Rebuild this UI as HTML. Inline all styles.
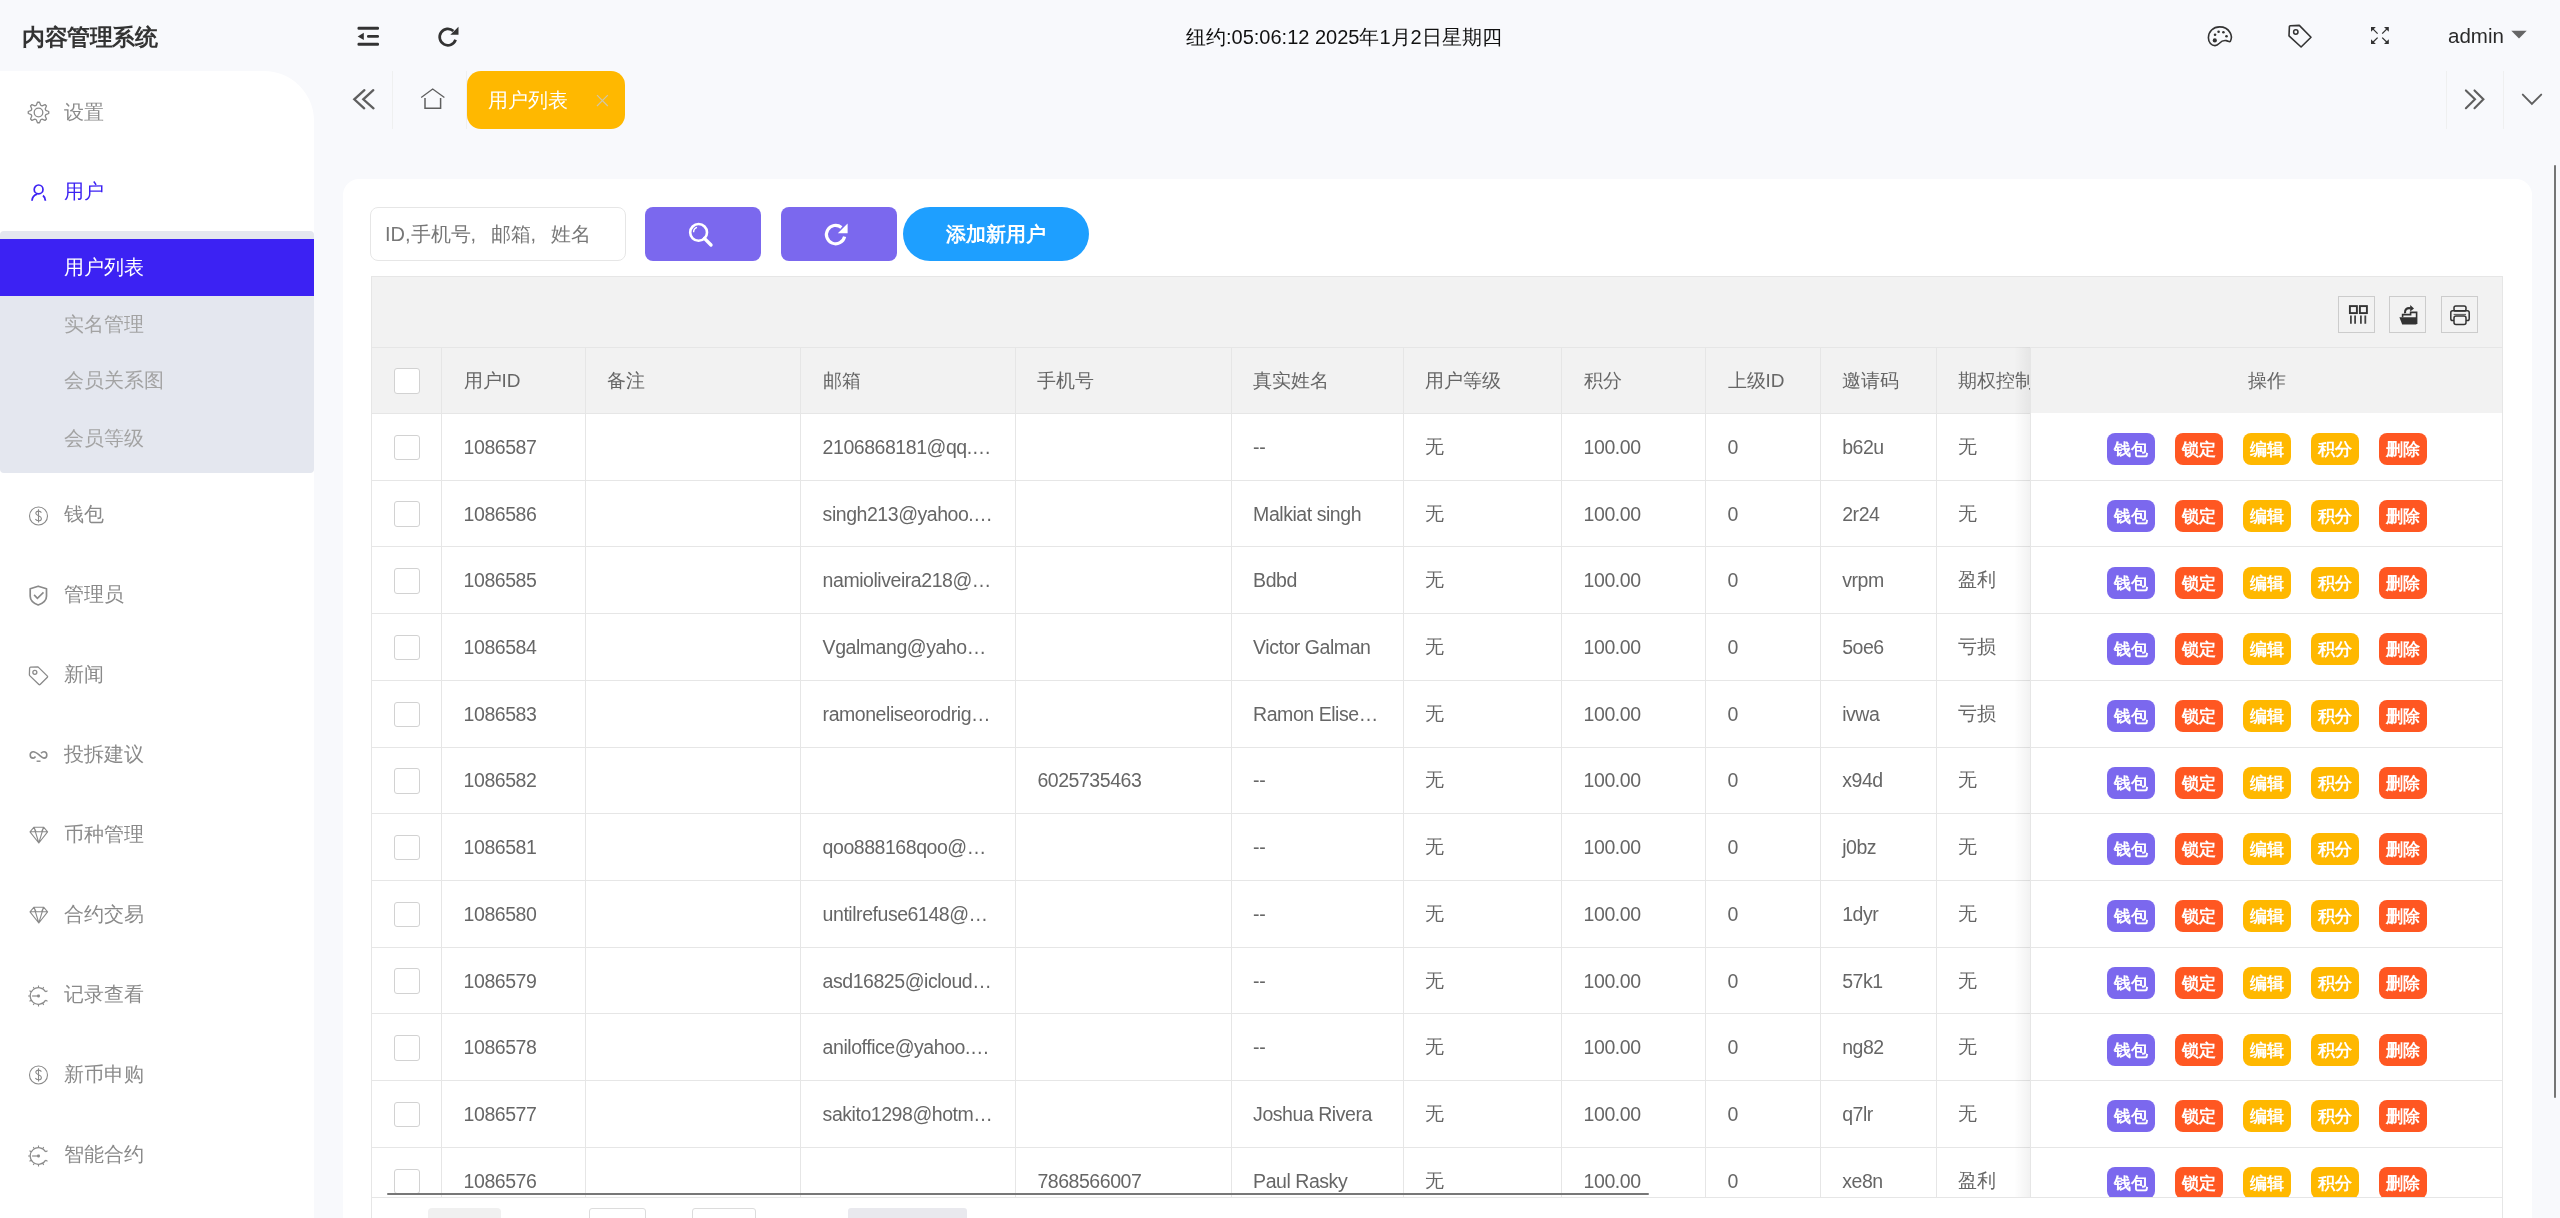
<!DOCTYPE html><html><head><meta charset="utf-8"><style>
*{box-sizing:border-box;margin:0;padding:0}
html,body{width:2560px;height:1218px;overflow:hidden}
body{background:#f8f9fc;font-family:"Liberation Sans",sans-serif;position:relative;color:#333}
.a{position:absolute}
svg{display:block;position:absolute;overflow:visible}
.logo{left:22px;top:21px;font-size:23px;letter-spacing:-0.5px;font-weight:bold;color:#333;white-space:nowrap;line-height:32px}
.side{left:0;top:71px;width:314px;height:1200px;background:#fff;border-top-right-radius:50px}
.mi{position:absolute;left:64px;font-size:20px;color:#8a8a8a;line-height:28px;white-space:nowrap}
.sub{left:0;top:231px;width:314px;height:242px;background:#e4e7ef;border-radius:4px}
.act{left:0;top:239px;width:314px;height:57px;background:#3c22f3}
.card{left:343px;top:179px;width:2189px;height:1100px;background:#fff;border-radius:16px}
.t{position:absolute;font-size:19.5px;letter-spacing:-0.45px;color:#666;white-space:nowrap;line-height:24px}
.th{position:absolute;font-size:19px;color:#666;white-space:nowrap;line-height:24px}
.hl{position:absolute;height:1px;background:#e6e6e6}
.vl{position:absolute;width:1px;background:#e6e6e6}
.cb{position:absolute;width:25.5px;height:25.5px;border:1px solid #d2d2d2;border-radius:3px;background:#fff}
.btn{position:absolute;width:48px;height:32px;border-radius:8px;color:#fff;font-size:17px;font-weight:bold;text-align:center;line-height:33px;letter-spacing:0}
.tb{position:absolute;width:37px;height:37px;border:1px solid #ccc}
</style></head><body><div id="w" style="position:absolute;left:0;top:0;width:2560px;height:1218px;overflow:hidden;will-change:transform">
<div class="a logo">内容管理系统</div>
<svg style="left:357px;top:26px" width="23" height="20" viewBox="0 0 23 20"><rect x="0.5" y="0.7" width="21.5" height="3" rx="1.2" fill="#333"/><rect x="10" y="9" width="12" height="2.8" rx="1.2" fill="#333"/><rect x="0.5" y="16.8" width="21.5" height="3" rx="1.2" fill="#333"/><path d="M0.7 10.4 L6.8 6.8 L6.8 14 Z" fill="#333"/></svg>
<svg style="left:438px;top:26px" width="22" height="21" viewBox="0 0 22 21"><path d="M17.6 13.8 A8.2 8.2 0 1 1 15.4 5" fill="none" stroke="#333" stroke-width="2.7"/><path d="M20.5 0.8 L20.5 8.8 L12.3 8.8 Z" fill="#333"/></svg>
<div class="a" style="left:1186px;top:23px;font-size:20px;color:#111;line-height:28px;white-space:nowrap">纽约:05:06:12 2025年1月2日星期四</div>
<svg style="left:2207px;top:26px" width="26" height="21" viewBox="0 0 26 21"><path d="M23.3 15.4 C24.6 13 24.8 9.5 23 6.5 C20.8 2.8 16.8 0.9 12.6 0.9 C6.2 0.9 1.4 5.6 1.4 11.8 C1.4 16.4 4.6 19.6 8 19.6 C10 19.6 11 18.6 12.4 17.2 C14.4 15.1 16.6 14.2 19.2 14.6 C21 14.9 22.6 16.4 23.3 15.4 Z" fill="none" stroke="#333" stroke-width="1.6"/><circle cx="7.8" cy="14.4" r="2.1" fill="#333"/><circle cx="8.05" cy="8.8" r="1.3" fill="#333"/><circle cx="11.6" cy="5.75" r="1.3" fill="#333"/><circle cx="16.4" cy="6.3" r="1.3" fill="#333"/><circle cx="19.5" cy="10.3" r="1.3" fill="#333"/></svg>
<svg style="left:2288px;top:24px" width="24" height="24" viewBox="0 0 24 24"><path d="M1.4 2.6 Q1.4 2 2.4 1.8 L11.3 1.4 L23 13.3 L13.1 23 L1 11.8 Z" fill="none" stroke="#333" stroke-width="1.6" stroke-linejoin="round"/><circle cx="7.8" cy="8" r="2.2" fill="none" stroke="#333" stroke-width="1.5"/></svg>
<svg style="left:2370px;top:26px" width="20" height="19" viewBox="0 0 20 19"><g fill="#333"><path d="M1 1 H5.8 L1 5.8 Z"/><path d="M18.8 1 H14 L18.8 5.8 Z"/><path d="M1 18.1 H5.8 L1 13.3 Z"/><path d="M18.8 18.1 H14 L18.8 13.3 Z"/></g><g stroke="#333" stroke-width="1.3"><path d="M2.6 2.6 L7.6 7.6 M17.2 2.6 L12.2 7.6 M2.6 16.5 L7.6 11.6 M17.2 16.5 L12.2 11.6"/></g></svg>
<div class="a" style="left:2448px;top:22px;font-size:20.5px;color:#2a2a2a;line-height:28px">admin</div>
<svg style="left:2511px;top:30px" width="16" height="9" viewBox="0 0 16 9"><path d="M0.3 0.8 H15.7 L8 8.6 Z" fill="#666"/></svg>
<div class="a side"></div><div class="a sub"></div><div class="a act"></div>
<div class="mi" style="top:98px;color:#8a8a8a">设置</div>
<div class="mi" style="top:177px;color:#3c22f3">用户</div>
<div class="mi" style="top:499.5px;color:#8a8a8a">钱包</div>
<div class="mi" style="top:579.56px;color:#8a8a8a">管理员</div>
<div class="mi" style="top:659.62px;color:#8a8a8a">新闻</div>
<div class="mi" style="top:739.68px;color:#8a8a8a">投拆建议</div>
<div class="mi" style="top:819.74px;color:#8a8a8a">币种管理</div>
<div class="mi" style="top:899.8px;color:#8a8a8a">合约交易</div>
<div class="mi" style="top:979.86px;color:#8a8a8a">记录查看</div>
<div class="mi" style="top:1059.92px;color:#8a8a8a">新币申购</div>
<div class="mi" style="top:1139.98px;color:#8a8a8a">智能合约</div>
<div class="mi" style="top:253px;color:#fff">用户列表</div>
<div class="mi" style="top:310px;color:#a3a3a3">实名管理</div>
<div class="mi" style="top:366px;color:#a3a3a3">会员关系图</div>
<div class="mi" style="top:424px;color:#a3a3a3">会员等级</div>
<svg style="left:28px;top:101.5px" width="21" height="21" viewBox="0 0 21 21"><path d="M9.49 0.25 L11.51 0.25 L12.71 3.23 L14.08 3.80 L17.03 2.54 L18.46 3.97 L17.20 6.92 L17.77 8.29 L20.75 9.49 L20.75 11.51 L17.77 12.71 L17.20 14.08 L18.46 17.03 L17.03 18.46 L14.08 17.20 L12.71 17.77 L11.51 20.75 L9.49 20.75 L8.29 17.77 L6.92 17.20 L3.97 18.46 L2.54 17.03 L3.80 14.08 L3.23 12.71 L0.25 11.51 L0.25 9.49 L3.23 8.29 L3.80 6.92 L2.54 3.97 L3.97 2.54 L6.92 3.80 L8.29 3.23Z" fill="none" stroke="#8a8a8a" stroke-width="1.3" stroke-linejoin="round"/><circle cx="10.5" cy="10.5" r="4.3" fill="none" stroke="#8a8a8a" stroke-width="1.3"/></svg>
<svg style="left:31px;top:183.5px" width="16" height="17" viewBox="0 0 16 17"><circle cx="7.6" cy="5.4" r="4.4" fill="none" stroke="#3c22f3" stroke-width="1.7"/><path d="M1 16.7 C1.2 13.4 3 11 6.2 10.1" fill="none" stroke="#3c22f3" stroke-width="1.8"/><path d="M12 11.5 C13.4 12.6 14.3 14.4 14.4 16.7" fill="none" stroke="#3c22f3" stroke-width="1.8"/></svg>
<svg style="left:28.5px;top:505.5px" width="20" height="20" viewBox="0 0 20 20"><circle cx="9.5" cy="10" r="9" fill="none" stroke="#8a8a8a" stroke-width="1.1"/><path d="M12.4 6.6 C11.8 5.6 10.8 5.1 9.5 5.1 C7.9 5.1 6.8 6 6.8 7.3 C6.8 10.1 12.4 9.2 12.4 12.4 C12.4 13.8 11.2 14.8 9.5 14.8 C8 14.8 6.9 14.1 6.4 13 M9.5 3.3 V16.6" fill="none" stroke="#8a8a8a" stroke-width="1.1"/></svg>
<svg style="left:29px;top:584.8px" width="19" height="21" viewBox="0 0 19 21"><path d="M9.2 1.2 L17.5 3.8 V11.2 C17.5 15.2 13.6 18.3 9.2 20 C4.8 18.3 1.2 15.2 1.2 11.2 V3.8 Z" fill="none" stroke="#8a8a8a" stroke-width="1.7" stroke-linejoin="round"/><path d="M5.1 9.9 L8.4 13.3 L14.5 7.4" fill="none" stroke="#8a8a8a" stroke-width="1.6"/></svg>
<svg style="left:28px;top:665.5px" width="21" height="21" viewBox="0 0 21 21"><path d="M2.6 1.1 L10 0.9 L19.4 10.1 Q19.9 10.7 19.4 11.2 L12.1 18.5 Q11.5 19 10.9 18.5 L1.7 9.6 Q1.3 9.2 1.4 8.6 L1.6 2.2 Q1.7 1.2 2.6 1.1 Z" fill="none" stroke="#8a8a8a" stroke-width="1.3" stroke-linejoin="round"/><circle cx="6.85" cy="6.3" r="2" fill="none" stroke="#8a8a8a" stroke-width="1.3"/></svg>
<svg style="left:29px;top:750px" width="19" height="13" viewBox="0 0 19 13"><path d="M6.5 6.5 C5.8 7.6 5 8.1 4.2 8.1 C2.6 8.1 1.2 7 1.2 5 C1.2 3 2.6 1.8 4.2 1.8 C6.6 1.8 9 4 10.6 5.4 C12.2 6.8 13.4 8.1 15 8.1 C16.6 8.1 17.8 6.9 17.8 5 C17.8 3 16.6 1.8 15 1.8 C13.8 1.8 12.6 2.6 12 3.3" fill="none" stroke="#8a8a8a" stroke-width="1.6"/><path d="M7.6 11.2 H11.5" stroke="#8a8a8a" stroke-width="1.4"/></svg>
<svg style="left:29px;top:826px" width="20" height="18" viewBox="0 0 20 18"><path d="M1 5.8 L5 1.2 H14.6 L18.6 5.8 L9.8 17 Z M1 5.8 H18.6 M5 1.2 L9.8 17 L14.6 1.2 M5 1.2 L7 5.8 M14.6 1.2 L12.6 5.8" fill="none" stroke="#8a8a8a" stroke-width="1.1" stroke-linejoin="round"/></svg>
<svg style="left:29px;top:906px" width="20" height="18" viewBox="0 0 20 18"><path d="M1 5.8 L5 1.2 H14.6 L18.6 5.8 L9.8 17 Z M1 5.8 H18.6 M5 1.2 L9.8 17 L14.6 1.2 M5 1.2 L7 5.8 M14.6 1.2 L12.6 5.8" fill="none" stroke="#8a8a8a" stroke-width="1.1" stroke-linejoin="round"/></svg>
<svg style="left:28px;top:982.5px" width="22" height="26" viewBox="0 0 22 26"><path d="M17.69 8.85 A8.3 8.3 0 1 0 17.69 17.15" fill="none" stroke="#8a8a8a" stroke-width="1.2"/><path d="M17.69 8.85 L19.51 7.80 M14.65 5.81 L15.70 3.99 M10.50 4.70 L10.50 2.60 M6.35 5.81 L5.30 3.99 M3.31 8.85 L1.49 7.80 M2.20 13.00 L0.10 13.00 M3.31 17.15 L1.49 18.20 M6.35 20.19 L5.30 22.01 M10.50 21.30 L10.50 23.40 M14.65 20.19 L15.70 22.01 M17.69 17.15 L19.51 18.20" stroke="#8a8a8a" stroke-width="1.1"/><path d="M4.1 13 H10" stroke="#8a8a8a" stroke-width="1.2"/><rect x="9.1" y="11.6" width="2.8" height="2.8" rx="0.8" fill="#8a8a8a"/></svg>
<svg style="left:28.5px;top:1065px" width="20" height="20" viewBox="0 0 20 20"><circle cx="9.5" cy="10" r="9" fill="none" stroke="#8a8a8a" stroke-width="1.1"/><path d="M12.4 6.6 C11.8 5.6 10.8 5.1 9.5 5.1 C7.9 5.1 6.8 6 6.8 7.3 C6.8 10.1 12.4 9.2 12.4 12.4 C12.4 13.8 11.2 14.8 9.5 14.8 C8 14.8 6.9 14.1 6.4 13 M9.5 3.3 V16.6" fill="none" stroke="#8a8a8a" stroke-width="1.1"/></svg>
<svg style="left:28px;top:1142.5px" width="22" height="26" viewBox="0 0 22 26"><path d="M17.69 8.85 A8.3 8.3 0 1 0 17.69 17.15" fill="none" stroke="#8a8a8a" stroke-width="1.2"/><path d="M17.69 8.85 L19.51 7.80 M14.65 5.81 L15.70 3.99 M10.50 4.70 L10.50 2.60 M6.35 5.81 L5.30 3.99 M3.31 8.85 L1.49 7.80 M2.20 13.00 L0.10 13.00 M3.31 17.15 L1.49 18.20 M6.35 20.19 L5.30 22.01 M10.50 21.30 L10.50 23.40 M14.65 20.19 L15.70 22.01 M17.69 17.15 L19.51 18.20" stroke="#8a8a8a" stroke-width="1.1"/><path d="M4.1 13 H10" stroke="#8a8a8a" stroke-width="1.2"/><rect x="9.1" y="11.6" width="2.8" height="2.8" rx="0.8" fill="#8a8a8a"/></svg>
<svg style="left:353px;top:88px" width="22" height="22" viewBox="0 0 22 22"><path d="M11.4 2.2 L1.3 11.3 L11.2 20.3 M20.3 2.2 L10.3 11.3 L20.5 20.3" fill="none" stroke="#5f5f5f" stroke-width="2.3" stroke-linecap="round"/></svg>
<div class="a" style="left:392px;top:71px;width:1px;height:58px;background:#eff0f0"></div>
<svg style="left:420px;top:88px" width="26" height="22" viewBox="0 0 26 22"><path d="M1.2 9.6 L12.7 1 L24.4 9.6" fill="none" stroke="#5f5f5f" stroke-width="1.3"/><path d="M5 10 V20.2 H20.6 V10" fill="none" stroke="#5f5f5f" stroke-width="1.5"/></svg>
<div class="a" style="left:466px;top:71px;width:1px;height:58px;background:#eff0f0"></div>
<div class="a" style="left:467px;top:71px;width:158px;height:58px;background:#ffb800;border-radius:14px"></div>
<div class="a" style="left:488px;top:86px;font-size:20px;color:#fff;line-height:28px">用户列表</div>
<svg style="left:596px;top:94px" width="13" height="13" viewBox="0 0 13 13"><path d="M1 1.2 L11.8 12 M11.8 1.2 L1 12" stroke="#d0c6a8" stroke-width="1.2"/></svg>
<div class="a" style="left:2446px;top:71px;width:1px;height:58px;background:#eff0f0"></div>
<div class="a" style="left:2503px;top:71px;width:1px;height:58px;background:#eff0f0"></div>
<svg style="left:2464px;top:88px" width="22" height="22" viewBox="0 0 22 22"><path d="M1.9 2.4 L11 11.3 L1.9 20.2 M10.5 2.4 L19.4 11.3 L10.5 20.2" fill="none" stroke="#5f5f5f" stroke-width="2.1" stroke-linecap="round"/></svg>
<svg style="left:2521px;top:93px" width="22" height="13" viewBox="0 0 22 13"><path d="M1.8 1.6 L10.9 11 L20.2 1.6" fill="none" stroke="#5f5f5f" stroke-width="1.9" stroke-linecap="round"/></svg>
<div class="a card"></div>
<div class="a" style="left:370px;top:207px;width:256px;height:54px;border:1px solid #e6e6e6;border-radius:8px;background:#fff"></div>
<div class="a" style="left:385px;top:220px;font-size:20px;color:#777;line-height:28px;white-space:nowrap">ID,手机号<span style="display:inline-block;width:20px">,</span>邮箱<span style="display:inline-block;width:20px">,</span>姓名</div>
<div class="a" style="left:645px;top:207px;width:116px;height:54px;background:#7b68ee;border-radius:8px"></div>
<svg style="left:688px;top:222px" width="26" height="25" viewBox="0 0 26 25"><circle cx="10.6" cy="10.4" r="8.4" fill="none" stroke="#fff" stroke-width="2.6"/><path d="M16.4 16.4 L23 23" stroke="#fff" stroke-width="3.4" stroke-linecap="round"/><path d="M5.6 10.2 A5 5 0 0 1 9 5.4" fill="none" stroke="#fff" stroke-width="1.4"/></svg>
<div class="a" style="left:781px;top:207px;width:116px;height:54px;background:#7b68ee;border-radius:8px"></div>
<svg style="left:824px;top:222px" width="26" height="25" viewBox="0 0 26 25"><path d="M20.6 14.6 A9.2 9.2 0 1 1 17.4 5.4" fill="none" stroke="#fff" stroke-width="3.2"/><path d="M23.6 1.4 V11.2 H13.8 Z" fill="#fff"/></svg>
<div class="a" style="left:903px;top:207px;width:186px;height:54px;background:#1e9fff;border-radius:27px"></div>
<div class="a" style="left:946px;top:219px;font-size:19.5px;font-weight:bold;color:#fff;line-height:30px;white-space:nowrap">添加新用户</div>
<div class="a" style="left:371px;top:276px;width:2132px;height:137.5px;background:#f2f2f2"></div>
<div class="a" style="left:371px;top:276px;width:2132px;height:922.5px;border:1px solid #e6e6e6"></div>
<div class="hl" style="left:371px;top:347.2px;width:2132px"></div>
<div class="hl" style="left:371px;top:413.0px;width:2132px"></div>
<div class="tb" style="left:2338px;top:296px"></div>
<div class="tb" style="left:2389.3px;top:296px"></div>
<div class="tb" style="left:2441px;top:296px"></div>
<svg style="left:2348px;top:304px" width="21" height="21" viewBox="0 0 21 21"><rect x="1.9" y="2.1" width="7" height="7" fill="none" stroke="#333" stroke-width="1.9"/><rect x="11.9" y="2.1" width="7" height="7" fill="none" stroke="#333" stroke-width="1.9"/><path d="M2.9 11.6 V19.8 M7.1 11.6 V19.8 M12.9 11.6 V19.8 M17.3 11.6 V19.8" stroke="#444" stroke-width="1.8"/></svg>
<svg style="left:2399px;top:305px" width="20" height="21" viewBox="0 0 20 21"><path d="M0.4 12.3 H17.4 V19.6 H3.2 Z" fill="#333"/><path d="M3.6 12.3 V9.6 H11.6 V7.4 H17.6 V19" fill="none" stroke="#333" stroke-width="1.6"/><path d="M6 8.2 C5.4 4.6 8 2.6 11.6 3.4" fill="none" stroke="#333" stroke-width="2.2"/><path d="M11.2 0 L15 3.4 L11.2 6.4 Z" fill="#333"/></svg>
<svg style="left:2450px;top:305px" width="21" height="21" viewBox="0 0 21 21"><rect x="4" y="1" width="12" height="5" rx="1.8" fill="none" stroke="#333" stroke-width="1.5"/><path d="M4 15.6 H2.6 C1.6 15.6 0.8 14.8 0.8 13.8 V7.6 C0.8 6.6 1.6 5.8 2.6 5.8 H17.4 C18.4 5.8 19.2 6.6 19.2 7.6 V13.8 C19.2 14.8 18.4 15.6 17.4 15.6 H16" fill="none" stroke="#333" stroke-width="1.5"/><rect x="4" y="11" width="12" height="8.6" rx="2" fill="none" stroke="#333" stroke-width="1.5"/><path d="M3.6 9.4 H16" stroke="#555" stroke-width="1"/></svg>
<div class="vl" style="left:441.1px;top:347.2px;height:850.3px"></div>
<div class="vl" style="left:584.8px;top:347.2px;height:850.3px"></div>
<div class="vl" style="left:800.1px;top:347.2px;height:850.3px"></div>
<div class="vl" style="left:1014.9px;top:347.2px;height:850.3px"></div>
<div class="vl" style="left:1230.6px;top:347.2px;height:850.3px"></div>
<div class="vl" style="left:1402.7px;top:347.2px;height:850.3px"></div>
<div class="vl" style="left:1561.1px;top:347.2px;height:850.3px"></div>
<div class="vl" style="left:1705.0px;top:347.2px;height:850.3px"></div>
<div class="vl" style="left:1819.7px;top:347.2px;height:850.3px"></div>
<div class="vl" style="left:1935.7px;top:347.2px;height:850.3px"></div>
<div class="th" style="left:463.6px;top:369px">用户ID</div>
<div class="th" style="left:607.3px;top:369px">备注</div>
<div class="th" style="left:822.6px;top:369px">邮箱</div>
<div class="th" style="left:1037.4px;top:369px">手机号</div>
<div class="th" style="left:1253.1px;top:369px">真实姓名</div>
<div class="th" style="left:1425.2px;top:369px">用户等级</div>
<div class="th" style="left:1583.6px;top:369px">积分</div>
<div class="th" style="left:1727.5px;top:369px">上级ID</div>
<div class="th" style="left:1842.2px;top:369px">邀请码</div>
<div class="th" style="left:1958.2px;top:369px">期权控制</div>
<div class="cb" style="left:394px;top:368px"></div>
<div class="hl" style="left:371px;top:479.72px;width:2132px"></div>
<div class="cb" style="left:394.3px;top:434.66px"></div>
<div class="t" style="left:463.6px;top:434.86px">1086587</div>
<div class="t" style="left:822.6px;top:434.86px">2106868181@qq.…</div>
<div class="t" style="left:1253.1px;top:434.86px">--</div>
<div class="th" style="left:1425.2px;top:434.86px">无</div>
<div class="t" style="left:1583.6px;top:434.86px">100.00</div>
<div class="t" style="left:1727.5px;top:434.86px">0</div>
<div class="t" style="left:1842.2px;top:434.86px">b62u</div>
<div class="th" style="left:1958.2px;top:434.86px">无</div>
<div class="hl" style="left:371px;top:546.44px;width:2132px"></div>
<div class="cb" style="left:394.3px;top:501.38000000000005px"></div>
<div class="t" style="left:463.6px;top:501.58000000000004px">1086586</div>
<div class="t" style="left:822.6px;top:501.58000000000004px">singh213@yahoo.…</div>
<div class="t" style="left:1253.1px;top:501.58000000000004px">Malkiat singh</div>
<div class="th" style="left:1425.2px;top:501.58000000000004px">无</div>
<div class="t" style="left:1583.6px;top:501.58000000000004px">100.00</div>
<div class="t" style="left:1727.5px;top:501.58000000000004px">0</div>
<div class="t" style="left:1842.2px;top:501.58000000000004px">2r24</div>
<div class="th" style="left:1958.2px;top:501.58000000000004px">无</div>
<div class="hl" style="left:371px;top:613.1600000000001px;width:2132px"></div>
<div class="cb" style="left:394.3px;top:568.1px"></div>
<div class="t" style="left:463.6px;top:568.3000000000001px">1086585</div>
<div class="t" style="left:822.6px;top:568.3000000000001px">namioliveira218@…</div>
<div class="t" style="left:1253.1px;top:568.3000000000001px">Bdbd</div>
<div class="th" style="left:1425.2px;top:568.3000000000001px">无</div>
<div class="t" style="left:1583.6px;top:568.3000000000001px">100.00</div>
<div class="t" style="left:1727.5px;top:568.3000000000001px">0</div>
<div class="t" style="left:1842.2px;top:568.3000000000001px">vrpm</div>
<div class="th" style="left:1958.2px;top:568.3000000000001px">盈利</div>
<div class="hl" style="left:371px;top:679.88px;width:2132px"></div>
<div class="cb" style="left:394.3px;top:634.8199999999999px"></div>
<div class="t" style="left:463.6px;top:635.02px">1086584</div>
<div class="t" style="left:822.6px;top:635.02px">Vgalmang@yaho…</div>
<div class="t" style="left:1253.1px;top:635.02px">Victor Galman</div>
<div class="th" style="left:1425.2px;top:635.02px">无</div>
<div class="t" style="left:1583.6px;top:635.02px">100.00</div>
<div class="t" style="left:1727.5px;top:635.02px">0</div>
<div class="t" style="left:1842.2px;top:635.02px">5oe6</div>
<div class="th" style="left:1958.2px;top:635.02px">亏损</div>
<div class="hl" style="left:371px;top:746.6px;width:2132px"></div>
<div class="cb" style="left:394.3px;top:701.54px"></div>
<div class="t" style="left:463.6px;top:701.74px">1086583</div>
<div class="t" style="left:822.6px;top:701.74px">ramoneliseorodrig…</div>
<div class="t" style="left:1253.1px;top:701.74px">Ramon Elise…</div>
<div class="th" style="left:1425.2px;top:701.74px">无</div>
<div class="t" style="left:1583.6px;top:701.74px">100.00</div>
<div class="t" style="left:1727.5px;top:701.74px">0</div>
<div class="t" style="left:1842.2px;top:701.74px">ivwa</div>
<div class="th" style="left:1958.2px;top:701.74px">亏损</div>
<div class="hl" style="left:371px;top:813.32px;width:2132px"></div>
<div class="cb" style="left:394.3px;top:768.26px"></div>
<div class="t" style="left:463.6px;top:768.46px">1086582</div>
<div class="t" style="left:1037.4px;top:768.46px">6025735463</div>
<div class="t" style="left:1253.1px;top:768.46px">--</div>
<div class="th" style="left:1425.2px;top:768.46px">无</div>
<div class="t" style="left:1583.6px;top:768.46px">100.00</div>
<div class="t" style="left:1727.5px;top:768.46px">0</div>
<div class="t" style="left:1842.2px;top:768.46px">x94d</div>
<div class="th" style="left:1958.2px;top:768.46px">无</div>
<div class="hl" style="left:371px;top:880.04px;width:2132px"></div>
<div class="cb" style="left:394.3px;top:834.9799999999999px"></div>
<div class="t" style="left:463.6px;top:835.18px">1086581</div>
<div class="t" style="left:822.6px;top:835.18px">qoo888168qoo@…</div>
<div class="t" style="left:1253.1px;top:835.18px">--</div>
<div class="th" style="left:1425.2px;top:835.18px">无</div>
<div class="t" style="left:1583.6px;top:835.18px">100.00</div>
<div class="t" style="left:1727.5px;top:835.18px">0</div>
<div class="t" style="left:1842.2px;top:835.18px">j0bz</div>
<div class="th" style="left:1958.2px;top:835.18px">无</div>
<div class="hl" style="left:371px;top:946.76px;width:2132px"></div>
<div class="cb" style="left:394.3px;top:901.6999999999999px"></div>
<div class="t" style="left:463.6px;top:901.9px">1086580</div>
<div class="t" style="left:822.6px;top:901.9px">untilrefuse6148@…</div>
<div class="t" style="left:1253.1px;top:901.9px">--</div>
<div class="th" style="left:1425.2px;top:901.9px">无</div>
<div class="t" style="left:1583.6px;top:901.9px">100.00</div>
<div class="t" style="left:1727.5px;top:901.9px">0</div>
<div class="t" style="left:1842.2px;top:901.9px">1dyr</div>
<div class="th" style="left:1958.2px;top:901.9px">无</div>
<div class="hl" style="left:371px;top:1013.48px;width:2132px"></div>
<div class="cb" style="left:394.3px;top:968.42px"></div>
<div class="t" style="left:463.6px;top:968.62px">1086579</div>
<div class="t" style="left:822.6px;top:968.62px">asd16825@icloud…</div>
<div class="t" style="left:1253.1px;top:968.62px">--</div>
<div class="th" style="left:1425.2px;top:968.62px">无</div>
<div class="t" style="left:1583.6px;top:968.62px">100.00</div>
<div class="t" style="left:1727.5px;top:968.62px">0</div>
<div class="t" style="left:1842.2px;top:968.62px">57k1</div>
<div class="th" style="left:1958.2px;top:968.62px">无</div>
<div class="hl" style="left:371px;top:1080.2px;width:2132px"></div>
<div class="cb" style="left:394.3px;top:1035.1399999999999px"></div>
<div class="t" style="left:463.6px;top:1035.34px">1086578</div>
<div class="t" style="left:822.6px;top:1035.34px">aniloffice@yahoo.…</div>
<div class="t" style="left:1253.1px;top:1035.34px">--</div>
<div class="th" style="left:1425.2px;top:1035.34px">无</div>
<div class="t" style="left:1583.6px;top:1035.34px">100.00</div>
<div class="t" style="left:1727.5px;top:1035.34px">0</div>
<div class="t" style="left:1842.2px;top:1035.34px">ng82</div>
<div class="th" style="left:1958.2px;top:1035.34px">无</div>
<div class="hl" style="left:371px;top:1146.92px;width:2132px"></div>
<div class="cb" style="left:394.3px;top:1101.86px"></div>
<div class="t" style="left:463.6px;top:1102.06px">1086577</div>
<div class="t" style="left:822.6px;top:1102.06px">sakito1298@hotm…</div>
<div class="t" style="left:1253.1px;top:1102.06px">Joshua Rivera</div>
<div class="th" style="left:1425.2px;top:1102.06px">无</div>
<div class="t" style="left:1583.6px;top:1102.06px">100.00</div>
<div class="t" style="left:1727.5px;top:1102.06px">0</div>
<div class="t" style="left:1842.2px;top:1102.06px">q7lr</div>
<div class="th" style="left:1958.2px;top:1102.06px">无</div>
<div class="cb" style="left:394.3px;top:1168.58px"></div>
<div class="t" style="left:463.6px;top:1168.78px">1086576</div>
<div class="t" style="left:1037.4px;top:1168.78px">7868566007</div>
<div class="t" style="left:1253.1px;top:1168.78px">Paul Rasky</div>
<div class="th" style="left:1425.2px;top:1168.78px">无</div>
<div class="t" style="left:1583.6px;top:1168.78px">100.00</div>
<div class="t" style="left:1727.5px;top:1168.78px">0</div>
<div class="t" style="left:1842.2px;top:1168.78px">xe8n</div>
<div class="th" style="left:1958.2px;top:1168.78px">盈利</div>
<div class="a" style="left:2014px;top:347.2px;width:16px;height:850.3px;background:linear-gradient(to right,rgba(0,0,0,0),rgba(0,0,0,0.05))"></div>
<div class="a" style="left:2030px;top:347.7px;width:472px;height:65.80000000000001px;background:#f2f2f2"></div>
<div class="a" style="left:2031px;top:413.0px;width:471px;height:784.5px;background:#fff"></div>
<div class="vl" style="left:2030px;top:347.2px;height:850.3px"></div>
<div class="th" style="left:2030px;width:473px;text-align:center;top:369px">操作</div>
<div class="hl" style="left:2030px;top:479.72px;width:472px"></div>
<div class="btn" style="left:2107px;top:433.06px;background:#7b68ee">钱包</div>
<div class="btn" style="left:2175px;top:433.06px;background:#ff5722">锁定</div>
<div class="btn" style="left:2243px;top:433.06px;background:#ffb800">编辑</div>
<div class="btn" style="left:2311px;top:433.06px;background:#ffb800">积分</div>
<div class="btn" style="left:2379px;top:433.06px;background:#ff5722">删除</div>
<div class="hl" style="left:2030px;top:546.44px;width:472px"></div>
<div class="btn" style="left:2107px;top:499.78000000000003px;background:#7b68ee">钱包</div>
<div class="btn" style="left:2175px;top:499.78000000000003px;background:#ff5722">锁定</div>
<div class="btn" style="left:2243px;top:499.78000000000003px;background:#ffb800">编辑</div>
<div class="btn" style="left:2311px;top:499.78000000000003px;background:#ffb800">积分</div>
<div class="btn" style="left:2379px;top:499.78000000000003px;background:#ff5722">删除</div>
<div class="hl" style="left:2030px;top:613.1600000000001px;width:472px"></div>
<div class="btn" style="left:2107px;top:566.5000000000001px;background:#7b68ee">钱包</div>
<div class="btn" style="left:2175px;top:566.5000000000001px;background:#ff5722">锁定</div>
<div class="btn" style="left:2243px;top:566.5000000000001px;background:#ffb800">编辑</div>
<div class="btn" style="left:2311px;top:566.5000000000001px;background:#ffb800">积分</div>
<div class="btn" style="left:2379px;top:566.5000000000001px;background:#ff5722">删除</div>
<div class="hl" style="left:2030px;top:679.88px;width:472px"></div>
<div class="btn" style="left:2107px;top:633.22px;background:#7b68ee">钱包</div>
<div class="btn" style="left:2175px;top:633.22px;background:#ff5722">锁定</div>
<div class="btn" style="left:2243px;top:633.22px;background:#ffb800">编辑</div>
<div class="btn" style="left:2311px;top:633.22px;background:#ffb800">积分</div>
<div class="btn" style="left:2379px;top:633.22px;background:#ff5722">删除</div>
<div class="hl" style="left:2030px;top:746.6px;width:472px"></div>
<div class="btn" style="left:2107px;top:699.94px;background:#7b68ee">钱包</div>
<div class="btn" style="left:2175px;top:699.94px;background:#ff5722">锁定</div>
<div class="btn" style="left:2243px;top:699.94px;background:#ffb800">编辑</div>
<div class="btn" style="left:2311px;top:699.94px;background:#ffb800">积分</div>
<div class="btn" style="left:2379px;top:699.94px;background:#ff5722">删除</div>
<div class="hl" style="left:2030px;top:813.32px;width:472px"></div>
<div class="btn" style="left:2107px;top:766.6600000000001px;background:#7b68ee">钱包</div>
<div class="btn" style="left:2175px;top:766.6600000000001px;background:#ff5722">锁定</div>
<div class="btn" style="left:2243px;top:766.6600000000001px;background:#ffb800">编辑</div>
<div class="btn" style="left:2311px;top:766.6600000000001px;background:#ffb800">积分</div>
<div class="btn" style="left:2379px;top:766.6600000000001px;background:#ff5722">删除</div>
<div class="hl" style="left:2030px;top:880.04px;width:472px"></div>
<div class="btn" style="left:2107px;top:833.38px;background:#7b68ee">钱包</div>
<div class="btn" style="left:2175px;top:833.38px;background:#ff5722">锁定</div>
<div class="btn" style="left:2243px;top:833.38px;background:#ffb800">编辑</div>
<div class="btn" style="left:2311px;top:833.38px;background:#ffb800">积分</div>
<div class="btn" style="left:2379px;top:833.38px;background:#ff5722">删除</div>
<div class="hl" style="left:2030px;top:946.76px;width:472px"></div>
<div class="btn" style="left:2107px;top:900.1px;background:#7b68ee">钱包</div>
<div class="btn" style="left:2175px;top:900.1px;background:#ff5722">锁定</div>
<div class="btn" style="left:2243px;top:900.1px;background:#ffb800">编辑</div>
<div class="btn" style="left:2311px;top:900.1px;background:#ffb800">积分</div>
<div class="btn" style="left:2379px;top:900.1px;background:#ff5722">删除</div>
<div class="hl" style="left:2030px;top:1013.48px;width:472px"></div>
<div class="btn" style="left:2107px;top:966.82px;background:#7b68ee">钱包</div>
<div class="btn" style="left:2175px;top:966.82px;background:#ff5722">锁定</div>
<div class="btn" style="left:2243px;top:966.82px;background:#ffb800">编辑</div>
<div class="btn" style="left:2311px;top:966.82px;background:#ffb800">积分</div>
<div class="btn" style="left:2379px;top:966.82px;background:#ff5722">删除</div>
<div class="hl" style="left:2030px;top:1080.2px;width:472px"></div>
<div class="btn" style="left:2107px;top:1033.54px;background:#7b68ee">钱包</div>
<div class="btn" style="left:2175px;top:1033.54px;background:#ff5722">锁定</div>
<div class="btn" style="left:2243px;top:1033.54px;background:#ffb800">编辑</div>
<div class="btn" style="left:2311px;top:1033.54px;background:#ffb800">积分</div>
<div class="btn" style="left:2379px;top:1033.54px;background:#ff5722">删除</div>
<div class="hl" style="left:2030px;top:1146.92px;width:472px"></div>
<div class="btn" style="left:2107px;top:1100.26px;background:#7b68ee">钱包</div>
<div class="btn" style="left:2175px;top:1100.26px;background:#ff5722">锁定</div>
<div class="btn" style="left:2243px;top:1100.26px;background:#ffb800">编辑</div>
<div class="btn" style="left:2311px;top:1100.26px;background:#ffb800">积分</div>
<div class="btn" style="left:2379px;top:1100.26px;background:#ff5722">删除</div>
<div class="btn" style="left:2107px;top:1166.98px;background:#7b68ee">钱包</div>
<div class="btn" style="left:2175px;top:1166.98px;background:#ff5722">锁定</div>
<div class="btn" style="left:2243px;top:1166.98px;background:#ffb800">编辑</div>
<div class="btn" style="left:2311px;top:1166.98px;background:#ffb800">积分</div>
<div class="btn" style="left:2379px;top:1166.98px;background:#ff5722">删除</div>
<div class="a" style="left:372px;top:1197.5px;width:2130px;height:30px;background:#fff"></div>
<div class="hl" style="left:371px;top:1197.0px;width:2132px"></div>
<div class="vl" style="left:371px;top:1197.5px;height:30px"></div>
<div class="vl" style="left:2502px;top:1197.5px;height:30px"></div>
<div class="a" style="left:387px;top:1192.7px;width:1262px;height:2.4px;background:#777;border-radius:1.2px"></div>
<div class="a" style="left:428px;top:1208px;width:73px;height:30px;background:#f0f0f0;border-radius:4px"></div>
<div class="a" style="left:589px;top:1208px;width:57px;height:30px;border:1px solid #dcdcdc;border-radius:3px;background:#fff"></div>
<div class="a" style="left:692px;top:1208px;width:64px;height:30px;border:1px solid #dcdcdc;border-radius:3px;background:#fff"></div>
<div class="a" style="left:848px;top:1208px;width:119px;height:30px;background:#e9e9ee;border-radius:3px"></div>
<div class="a" style="left:2553.8px;top:165px;width:2.4px;height:932.7px;background:#757575;border-radius:1.2px"></div>
</div></body></html>
